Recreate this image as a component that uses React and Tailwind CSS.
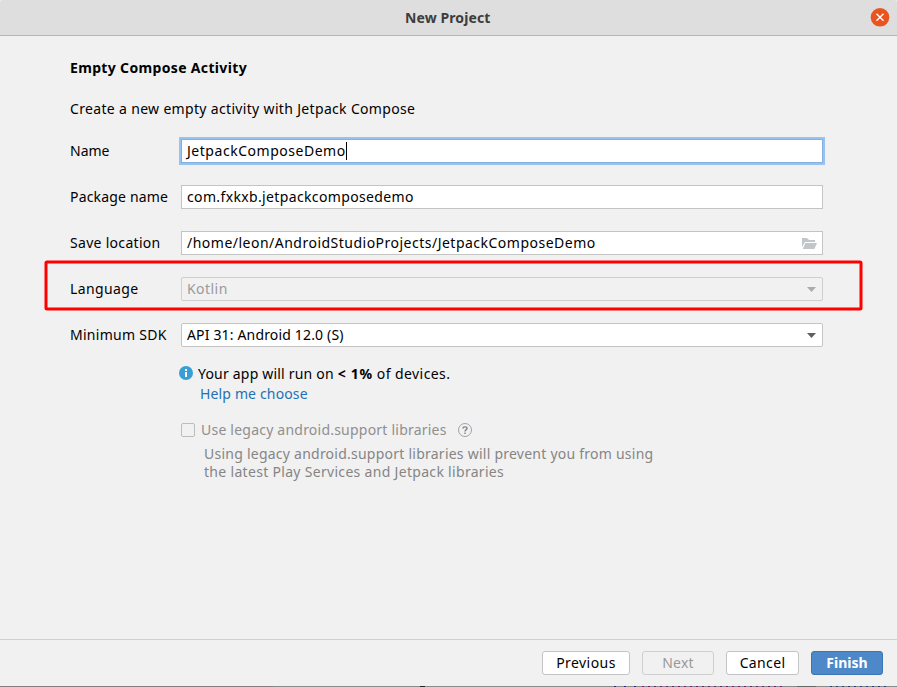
import React from "react";

const FIELD = "flex h-6 w-[642px] items-center border pl-[5px]";

function Row({ label, labelClass, children }) {
  return (
    <div className="flex h-6 items-center">
      <span className={"w-[111px] shrink-0 " + (labelClass || "")}>{label}</span>
      {children}
    </div>
  );
}

function Arrow({ color }) {
  return (
    <svg width="9" height="5" viewBox="0 0 9 5" className="mr-[6px] ml-auto mt-px">
      <path d="M0 0h9L4.5 5z" fill={color} />
    </svg>
  );
}

export default function App() {
  return (
    <div className="relative flex h-[687px] w-[897px] flex-col overflow-hidden bg-[#f1f1f1] font-['Noto_Sans','Open_Sans',sans-serif] text-[14px] leading-6 whitespace-nowrap text-black">
      <header className="flex h-9 shrink-0 items-center rounded-t-[3px] border-b border-[#b5b5b5] bg-[#dedede]">
        <h1 className="ml-[405px] font-bold tracking-[0.1px] text-[#3d3d3d]">New Project</h1>
        <svg width="20" height="20" viewBox="0 0 20 20" className="mr-[7px] ml-auto">
          <circle cx="10" cy="9.3" r="9.3" fill="#e95420" />
          <path d="M6.5 5.7l7 7M13.5 5.7l-7 7" stroke="#fff" strokeWidth="1.4" />
        </svg>
      </header>

      <main className="flex grow flex-col items-start pl-[70px]">
        <h2 className="mt-5 font-bold tracking-[0.34px]">Empty Compose Activity</h2>
        <p className="mt-[17px] tracking-[0.33px]">Create a new empty activity with Jetpack Compose</p>

        <div className="mt-[18px] flex flex-col gap-[22px]">
          <Row label="Name">
            <div className={FIELD + " border-[#87afda] bg-white ring-2 ring-[#97c3f3]"}>
              <span className="tracking-[0.53px]">JetpackComposeDemo</span>
              <i className="h-[18px] w-px bg-black" />
            </div>
          </Row>
          <Row label="Package name" labelClass="tracking-[0.17px]">
            <div className={FIELD + " border-[#c4c4c4] bg-white"}>
              <span className="tracking-[0.36px]">com.fxkxb.jetpackcomposedemo</span>
            </div>
          </Row>
          <Row label="Save location" labelClass="tracking-[0.3px]">
            <div className={FIELD + " border-[#c4c4c4] bg-white"}>
              <span className="tracking-[0.49px]">/home/leon/AndroidStudioProjects/JetpackComposeDemo</span>
              <svg width="15" height="11" viewBox="0 0 15 11" className="mr-[5px] ml-auto">
                <path d="M0 9V0h5l2 2h6v2H3z" fill="#c1c6ca" />
                <path d="M3.3 5H15l-2.6 6H.8z" fill="#c1c6ca" />
              </svg>
            </div>
          </Row>
          <Row label="Language" labelClass="tracking-[0.37px]">
            <div className={FIELD + " rounded-[2px] border-[#cfcfcf] bg-[#f1f1f1] text-[#999]"}>
              <span className="tracking-[0.45px]">Kotlin</span>
              <Arrow color="#ababab" />
            </div>
          </Row>
          <Row label="Minimum SDK" labelClass="tracking-[0.27px]">
            <div className={FIELD + " rounded-[2px] border-[#c4c4c4] bg-white"}>
              <span className="tracking-[0.16px]">API 31: Android 12.0 (S)</span>
              <Arrow color="#5f5f5f" />
            </div>
          </Row>
        </div>

        <div className="mt-[15px] ml-[109px] flex h-6 items-center">
          <svg width="14" height="14" viewBox="0 0 14 14" className="mb-[2px]">
            <circle cx="7" cy="7" r="7" fill="#389fd6" />
            <path d="M6 3h2v2H6zM6 6h2v5H6z" fill="#fff" />
          </svg>
          <span className="ml-[5px] tracking-[0.2px]">
            Your app will run on <b className="tracking-[0.7px]">&lt; 1%</b>
            <span className="tracking-[0.42px]"> of devices.</span>
          </span>
        </div>
        <a className="-mt-1 ml-[130px] tracking-[0.15px] text-[#2470b3]">Help me choose</a>

        <div className="mt-3 ml-[111px] flex h-6 items-center text-[#8f8f8f]">
          <i className="h-[14px] w-[14px] rounded-[2px] border border-[#bdbdbd]" />
          <span className="ml-[6px] tracking-[0.22px]">Use legacy android.support libraries</span>
          <svg width="14" height="14" viewBox="0 0 14 14" className="ml-[11px]" fill="none" stroke="#9da3a8">
            <circle cx="7" cy="7" r="6.5" />
            <path d="M5 5.6C5 3.3 9 3.3 9 5.6C9 7 7 6.9 7 8.5M7 9.5V11" stroke="#7f868c" strokeWidth="1.4" />
          </svg>
        </div>
        <p className="mt-[3px] ml-[134px] leading-[18px] text-[#858585]">
          <span className="tracking-[0.24px]">Using legacy android.support libraries will prevent you from using</span>
          <br />
          <span className="tracking-[0.31px]">the latest Play Services and Jetpack libraries</span>
        </p>
      </main>

      <footer className="flex h-[47px] shrink-0 items-start justify-end gap-3 border-t border-[#d0d0d0] pt-[11px] pr-[14px] leading-[22px]">
        <button className="h-6 w-[88px] rounded-[3px] border border-[#c4c4c4] bg-white tracking-[0.45px]">Previous</button>
        <button className="h-6 w-[72px] rounded-[3px] border border-[#cfcfcf] tracking-[0.2px] text-[#999]">Next</button>
        <button className="h-6 w-[73px] rounded-[3px] border border-[#c4c4c4] bg-white tracking-[0.35px]">Cancel</button>
        <button className="h-6 w-[72px] rounded-[3px] border border-[#3d75b2] bg-[#4d89c9] font-bold text-white">Finish</button>
      </footer>
      <div className="flex h-px shrink-0 bg-[#8a8a8a]">
        <i className="w-[273px] bg-[#8b7b7f]" />
        <i className="ml-[147px] w-[5px] bg-[#222]" />
        <i className="ml-[189px] w-[26px] bg-[repeating-linear-gradient(90deg,#2a2a80_0_2px,#8a8a8a_2px_10px)]" />
        <i className="ml-[2px] w-[142px] bg-[repeating-linear-gradient(90deg,#6d1f6d_0_2px,#8a8a8a_2px_6px)]" />
        <i className="ml-[13px] w-[19px] bg-[#666]" />
        <i className="ml-[14px] w-[60px] bg-[repeating-linear-gradient(90deg,#20407a_0_2px,#8a8a8a_2px_6px)]" />
      </div>

      <svg width="820" height="52" viewBox="0 0 820 52" className="pointer-events-none absolute top-[260px] left-[44px]">
        <rect x="2" y="2" width="815" height="47" rx="1" fill="none" stroke="#ff0000" strokeWidth="3" />
      </svg>
    </div>
  );
}
